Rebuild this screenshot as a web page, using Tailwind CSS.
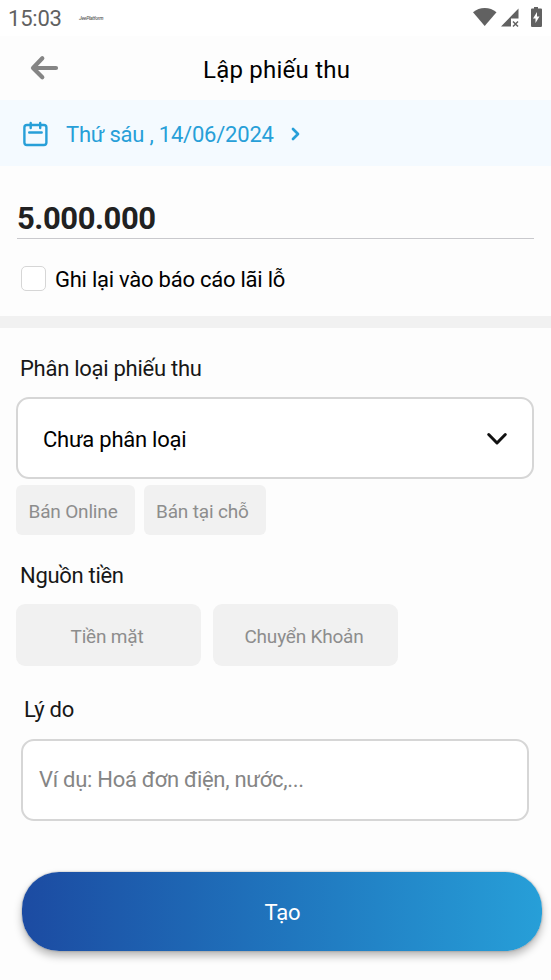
<!DOCTYPE html>
<html lang="vi">
<head>
<meta charset="utf-8">
<title>Lập phiếu thu</title>
<script src="https://cdn.jsdelivr.net/npm/@tailwindcss/browser@4"></script>
</head>
<body class="bg-[#fdfdfd]">
<div class="w-[551px] h-[980px] overflow-hidden flex flex-col font-[Roboto,sans-serif] text-[22px] leading-none tracking-[-0.24px] text-black whitespace-nowrap">
  <div class="h-9 shrink-0 flex items-center bg-white pl-2 text-[#616161]">
    <span class="mt-[2px] w-[71px] tracking-[-0.2px]">15:03</span>
    <span class="text-[5px] font-medium italic tracking-[-0.25px]">JeePlatform</span>
    <svg class="ml-auto" width="78" height="36" viewBox="0 0 78 36" fill="#616161">
      <path d="M0 12.2C6.500 6.500 17.000 6.500 23.500 12.200L11.700 26Z"/>
      <path d="M45.500 8.500V18.500H38V26.500H28Z"/>
      <path d="M40 21.500L45 26.500M45 21.500L40 26.500" stroke="#616161" stroke-width="1.500"/>
      <path fill-rule="evenodd" d="M61 7h4v1.500h3q1 0 1 1V25.500q0 1.500-1 1.500H59q-1 0-1-1.500V9.500q0-1 1-1h2ZM64 12l-4 6.500h2.500V23l4-6.500H64Z"/>
    </svg>
  </div>
  <header class="h-16 shrink-0 flex items-center pl-[30px]">
    <svg width="30" height="26" viewBox="0 0 30 26" fill="none" stroke="#858585" stroke-width="4.200" stroke-linecap="round" stroke-linejoin="round"><path d="M26 13H4M12.300 3.300L3 13L12.300 22.300"/></svg>
    <h1 class="ml-[143px] mt-[4px] text-[24px] tracking-[0.24px]">Lập phiếu thu</h1>
  </header>
  <div class="h-[66px] shrink-0 flex items-center bg-[#f4faff] text-[#279fd8] pl-[22px]">
    <svg class="mt-px" width="26" height="26" viewBox="0 0 26 26" fill="none" stroke="#279fd8" stroke-width="2.400" stroke-linecap="round"><rect x="2.400" y="4" width="22" height="20" rx="2.500"/><path d="M8.700 2V7M18.200 2V7M7.200 11.500H19.700"/></svg>
    <span class="ml-[18px] mt-[3px] w-[225px] tracking-[-0.22px]">Thứ sáu , 14/06/2024</span>
    <svg class="mt-[2px]" width="9" height="14" viewBox="0 0 9 14" fill="none" stroke="#279fd8" stroke-width="2.700" stroke-linecap="round" stroke-linejoin="round"><path d="M2 2L7 7L2 12"/></svg>
  </div>
  <section class="h-[150px] shrink-0 px-[17px]">
    <div class="h-[73px] border-b border-[#c9c9cd] pt-[37px] text-[31px] font-bold tracking-[-0.42px] text-[#212121]">5.000.000</div>
    <label class="flex h-[80px] items-center pl-1">
      <span class="-mt-px size-[25px] rounded-[5px] border-[1.5px] border-[#d6d6d6] bg-white"></span>
      <span class="ml-[9px] mt-px">Ghi lại vào báo cáo lãi lỗ</span>
    </label>
  </section>
  <div class="h-3 shrink-0 bg-[#f1f1f1]"></div>
  <section class="h-[207px] shrink-0 px-4">
    <h2 class="h-[69px] pt-[30px] pl-1 tracking-[-0.27px] text-[#171717]">Phân loại phiếu thu</h2>
    <div class="flex h-[82px] items-center rounded-[13px] border-2 border-[#d6d6d6] bg-white pl-[25px] pr-[24px] w-[518px]">
      <span class="mt-[3px]">Chưa phân loại</span>
      <svg class="ml-auto mt-px" width="22" height="14" viewBox="0 0 22 14" fill="none" stroke="#111" stroke-width="3" stroke-linecap="round" stroke-linejoin="round"><path d="M2.700 2.500L11 11L19.300 2.500"/></svg>
    </div>
    <div class="mt-[6px] flex gap-[9px] text-[19px] tracking-[-0.17px] text-[#8d8d8d]">
      <div class="flex h-[50px] w-[119px] items-center rounded-md bg-[#f1f1f1] pl-[12.5px]"><span class="mt-[2px]">Bán Online</span></div>
      <div class="flex h-[50px] w-[122px] items-center rounded-md bg-[#f1f1f1] pl-3"><span class="mt-[2px]">Bán tại chỗ</span></div>
    </div>
  </section>
  <section class="h-[131px] shrink-0 px-4">
    <h2 class="h-[69px] pt-[30px] pl-1 tracking-[-0.3px] text-[#171717]">Nguồn tiền</h2>
    <div class="flex gap-3 text-[19px] tracking-[-0.2px] text-[#8d8d8d]">
      <div class="flex h-[62px] w-[185px] items-center justify-center rounded-[9px] bg-[#f1f1f1]"><span class="mt-[3px] mr-[3px]">Tiền mặt</span></div>
      <div class="flex h-[62px] w-[185px] items-center justify-center rounded-[9px] bg-[#f1f1f1]"><span class="mt-[3px] mr-[3px]">Chuyển Khoản</span></div>
    </div>
  </section>
  <section class="h-[206px] shrink-0 pl-[21px]">
    <h2 class="h-[73px] pt-[33px] pl-[3px] text-[#171717]">Lý do</h2>
    <div class="flex h-[82px] w-[508px] items-center rounded-[13px] border-2 border-[#d6d6d6] bg-white pl-4 tracking-[-0.28px] text-[#858585]"><span>Ví dụ: Hoá đơn điện, nước,...</span></div>
  </section>
  <button class="ml-[22px] flex h-[79px] w-[520px] shrink-0 items-center justify-center rounded-[37px] bg-linear-to-r from-[#1c4ba2] to-[#279fd8] text-white shadow-[0_0_2px_rgba(0,0,0,0.35),0_5px_9px_rgba(0,0,0,0.28)]"><span class="mt-[3px] ml-px tracking-[-0.1px]">Tạo</span></button>
</div>
</body>
</html>
